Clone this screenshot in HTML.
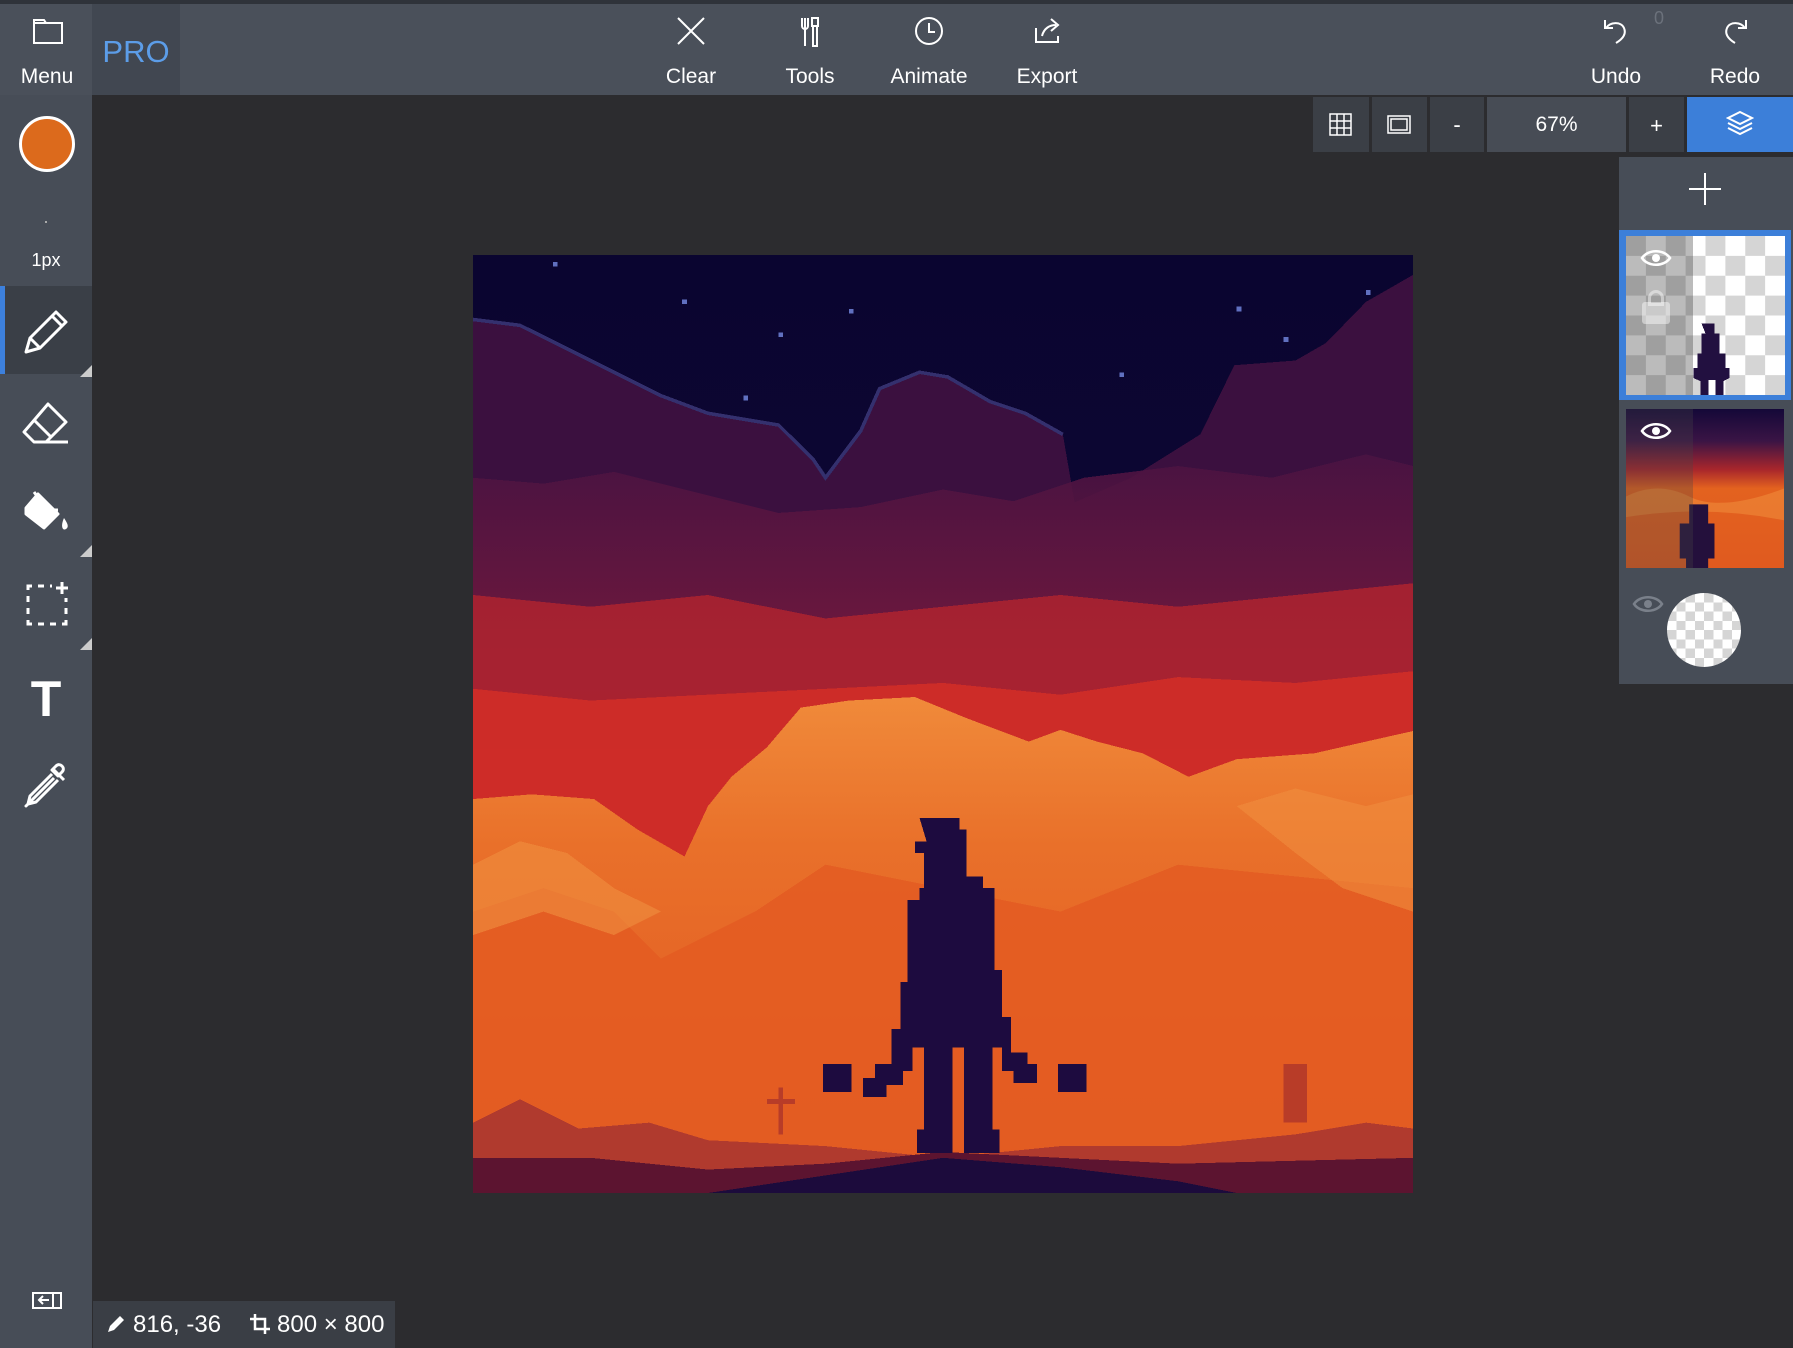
<!DOCTYPE html>
<html><head><meta charset="utf-8"><style>
*{margin:0;padding:0;box-sizing:border-box}
body{width:1793px;height:1348px;background:#2c2c2f;font-family:"Liberation Sans",sans-serif;color:#fff;position:relative;overflow:hidden}
.abs{position:absolute}
.top{left:0;top:0;width:1793px;height:95px;background:#4a505a;border-top:4px solid #2f333a}
.btn{position:absolute;top:4px;width:110px;height:91px;text-align:center}
.btn svg{position:absolute;left:40px;top:12px}
.btn span{position:absolute;left:0;right:0;top:61px;font-size:21px}
.side{left:0;top:95px;width:92px;height:1253px;background:#474d57}
.tool{position:absolute;left:0;width:92px;height:88px}
.tb{position:absolute;top:97px;height:55px;background:#3b3f46}
.tb svg{position:absolute}
</style></head><body>
<div class="abs top"></div>
<div class="abs" style="left:92px;top:4px;width:88px;height:91px;background:#414751"></div>
<div class="abs" style="left:92px;top:4px;width:88px;height:91px;text-align:center;line-height:95px;font-size:31px;color:#5c9de8">PRO</div>
<div class="btn" style="left:-8px"><svg width="32" height="30" viewBox="0 0 32 30"><path d="M2 4h10l2 3h16v20H2z M2 7h12" fill="none" stroke="#fff" stroke-width="2"/></svg><span>Menu</span></div>
<div class="btn" style="left:636px"><svg width="30" height="30" viewBox="0 0 30 30"><path d="M2 2L28 28M28 2L2 28" stroke="#fff" stroke-width="2"/></svg><span>Clear</span></div>
<div class="btn" style="left:755px"><svg width="30" height="32" viewBox="0 0 30 32"><path d="M10 2v28M7 2v8a3 3 0 006 0V2M18 10v20h4V10zM17 2h6v8h-6z" fill="none" stroke="#fff" stroke-width="2"/></svg><span>Tools</span></div>
<div class="btn" style="left:874px"><svg width="30" height="30" viewBox="0 0 30 30"><circle cx="15" cy="15" r="13" fill="none" stroke="#fff" stroke-width="2"/><path d="M15 7v9h6" fill="none" stroke="#fff" stroke-width="2"/></svg><span>Animate</span></div>
<div class="btn" style="left:992px"><svg width="32" height="30" viewBox="0 0 32 30"><path d="M4 12v14h22v-6M10 20c2-8 8-11 14-11M19 3l7 6-7 6" fill="none" stroke="#fff" stroke-width="2"/></svg><span>Export</span></div>
<div class="btn" style="left:1561px"><svg width="30" height="30" viewBox="0 0 30 30"><path d="M4 4v8h8M5 12C9 6 20 5 23 12s-3 12-8 15" fill="none" stroke="#fff" stroke-width="2"/></svg><span>Undo</span></div>
<div class="abs" style="left:1654px;top:8px;font-size:18px;color:#6b717b">0</div>
<div class="btn" style="left:1680px"><svg width="30" height="30" viewBox="0 0 30 30"><path d="M26 4v8h-8M25 12C21 6 10 5 7 12s3 12 8 15" fill="none" stroke="#fff" stroke-width="2"/></svg><span>Redo</span></div>

<div class="abs side"></div>
<div class="abs" style="left:19px;top:116px;width:56px;height:56px;border-radius:50%;background:#dc6a1c;border:3px solid #fff"></div>
<div class="abs" style="left:45px;top:221px;width:2px;height:2px;background:#aaa"></div>
<div class="abs" style="left:0;top:250px;width:92px;text-align:center;font-size:18px">1px</div>
<div class="tool" style="top:286px;background:#3a3f47;border-left:5px solid #3d80dc"></div>
<div class="abs" style="left:80px;top:365px;border-left:12px solid transparent;border-bottom:12px solid #ccc"></div>
<div class="abs" style="left:80px;top:545px;border-left:12px solid transparent;border-bottom:12px solid #ccc"></div>
<div class="abs" style="left:80px;top:638px;border-left:12px solid transparent;border-bottom:12px solid #ccc"></div>
<svg class="abs" style="left:20px;top:306px" width="52" height="52" viewBox="0 0 52 52"><path d="M6 46l4-14L36 6l10 10-26 26zM10 32l10 10M32 10l10 10" fill="none" stroke="#fff" stroke-width="3" stroke-linejoin="round"/></svg>
<svg class="abs" style="left:20px;top:400px" width="52" height="48" viewBox="0 0 52 48"><path d="M28 4l18 18-20 20H14L4 32zM14 20l18 18M14 42h34" fill="none" stroke="#fff" stroke-width="3" stroke-linejoin="round"/></svg>
<svg class="abs" style="left:22px;top:488px" width="50" height="50" viewBox="0 0 50 50"><path d="M16 6l20 20-14 14L4 26 4 20zM4 22h32" fill="#fff" stroke="#fff" stroke-width="3" stroke-linejoin="round"/><path d="M12 4l6 8" stroke="#fff" stroke-width="3"/><path d="M42 30c4 6 5 9 2 11s-6-2-2-11z" fill="#fff"/></svg>
<svg class="abs" style="left:24px;top:580px" width="48" height="48" viewBox="0 0 48 48"><path d="M4 10V6h4M14 6h6M26 6h2M4 16v6M4 28v6M4 40v4h4M14 44h6M26 44h6M38 44h4v-4M42 34v-6M42 22v-4" stroke="#fff" stroke-width="3" fill="none"/><path d="M38 2v12M32 8h12" stroke="#fff" stroke-width="3"/></svg>
<div class="abs" style="left:0;top:670px;width:92px;text-align:center;font-size:50px;font-weight:bold">T</div>
<svg class="abs" style="left:22px;top:760px" width="50" height="50" viewBox="0 0 50 50"><path d="M30 8l12 12M34 6c4-4 10 2 6 6l-4 4-6-6zM32 18L10 40l-6 6 6-6 0 0M30 14L8 36l-2 8 8-2 22-22" fill="none" stroke="#fff" stroke-width="3" stroke-linejoin="round"/></svg>
<svg class="abs" style="left:32px;top:1292px" width="30" height="18" viewBox="0 0 30 18"><rect x="1" y="1" width="28" height="15" fill="none" stroke="#fff" stroke-width="2"/><path d="M21 1v15M17 8H7M11 4L7 8l4 4" fill="none" stroke="#fff" stroke-width="2"/></svg>
<div class="abs" style="left:93px;top:1301px;width:302px;height:47px;background:#3a3e45;font-size:24px;line-height:47px">
<svg class="abs" style="left:14px;top:14px" width="18" height="18" viewBox="0 0 18 18"><path d="M1 17l2-6L13 1l4 4L7 15z" fill="#fff"/></svg>
<span class="abs" style="left:40px">816, -36</span>
<svg class="abs" style="left:157px;top:13px" width="20" height="20" viewBox="0 0 20 20"><path d="M5 0v15h15M0 5h15v15" fill="none" stroke="#fff" stroke-width="2.5"/></svg>
<span class="abs" style="left:184px">800 × 800</span></div>

<div class="tb" style="left:1313px;width:56px"><svg style="left:16px;top:16px" width="23" height="23" viewBox="0 0 23 23"><path d="M1 1h21v21H1zM8 1v21M15 1v21M1 8h21M1 15h21" fill="none" stroke="#fff" stroke-width="1.5"/></svg></div>
<div class="tb" style="left:1372px;width:55px"><svg style="left:15px;top:18px" width="24" height="19" viewBox="0 0 24 19"><rect x="1" y="1" width="22" height="17" fill="none" stroke="#fff" stroke-width="1.5"/><rect x="4" y="4" width="16" height="11" fill="none" stroke="#fff" stroke-width="1.5"/></svg></div>
<div class="tb" style="left:1430px;width:54px;text-align:center;line-height:55px;font-size:22px">-</div>
<div class="tb" style="left:1487px;width:139px;background:#474c55;text-align:center;line-height:55px;font-size:21px">67%</div>
<div class="tb" style="left:1629px;width:55px;text-align:center;line-height:58px;font-size:22px">+</div>
<div class="tb" style="left:1687px;width:106px;background:#3c7fd9"><svg style="left:39px;top:12px" width="28" height="28" viewBox="0 0 28 28"><path d="M14 3l12 6-12 6-12-6z" fill="none" stroke="#fff" stroke-width="2"/><path d="M2 14l12 6 12-6M2 19l12 6 12-6" fill="none" stroke="#fff" stroke-width="2"/></svg></div>

<div class="abs" style="left:1619px;top:157px;width:174px;height:527px;background:#474d57"></div>
<svg class="abs" style="left:1688px;top:172px" width="34" height="34" viewBox="0 0 34 34"><path d="M17 1v32M1 17h32" stroke="#fff" stroke-width="2"/></svg>
<div class="abs" style="left:1619px;top:230px;width:172px;height:170px;background:#3c7fd9"></div>
<svg class="abs" style="left:1626px;top:236px" width="159" height="159" viewBox="0 0 16 16" shape-rendering="crispEdges">
<defs><pattern id="ck" width="4" height="4" patternUnits="userSpaceOnUse"><rect width="4" height="4" fill="#fff"/><rect width="2" height="2" fill="#d5d5d5"/><rect x="2" y="2" width="2" height="2" fill="#d5d5d5"/></pattern></defs>
<rect width="16" height="16" fill="url(#ck)"/>
<path d="M7.6 8.8h1.3v1h.5v2h.6v1.5h.4v1l-.6.3v1.4H9v-1.5h-.7v1.5H7.5v-1.4l-.7-.3v-1h.4v-1.5h.4v-2h.4z" fill="#221040"/></svg>
<div class="abs" style="left:1626px;top:236px;width:67px;height:159px;background:rgba(60,60,60,.35)"></div>
<svg class="abs" style="left:1640px;top:247px" width="32" height="22" viewBox="0 0 32 22"><path d="M2 11C8 2 24 2 30 11 24 20 8 20 2 11z" fill="none" stroke="#fff" stroke-width="2.5"/><circle cx="16" cy="11" r="4" fill="#fff"/></svg>
<div class="abs" style="left:1642px;top:302px;width:28px;height:22px;background:rgba(255,255,255,.45);border-radius:3px"></div>
<div class="abs" style="left:1648px;top:290px;width:16px;height:16px;border:3px solid rgba(255,255,255,.45);border-radius:8px 8px 0 0"></div>
<svg class="abs" style="left:1626px;top:409px" width="158" height="159" viewBox="0 0 100 100" preserveAspectRatio="none"><defs><linearGradient id="lg2" x1="0" y1="0" x2="0" y2="1"><stop offset="0" stop-color="#140838"/><stop offset=".2" stop-color="#3a1445"/><stop offset=".38" stop-color="#a8262c"/><stop offset=".5" stop-color="#e3621f"/><stop offset="1" stop-color="#e05a1f"/></linearGradient></defs><rect width="100" height="100" fill="url(#lg2)"/><path d="M0 55Q20 45 40 55T100 50V70Q50 60 0 68z" fill="#f08a3a" opacity=".6"/><path d="M40 60h12v12h4v22h-4v6H38v-6h-4V72h6z" fill="#24103c"/></svg>
<div class="abs" style="left:1626px;top:409px;width:67px;height:159px;background:rgba(70,70,70,.3)"></div>
<svg class="abs" style="left:1640px;top:420px" width="32" height="22" viewBox="0 0 32 22"><path d="M2 11C8 2 24 2 30 11 24 20 8 20 2 11z" fill="none" stroke="#fff" stroke-width="2.5"/><circle cx="16" cy="11" r="4" fill="#fff"/></svg>
<svg class="abs" style="left:1632px;top:593px" width="32" height="22" viewBox="0 0 32 22"><path d="M2 11C8 2 24 2 30 11 24 20 8 20 2 11z" fill="none" stroke="#7a808a" stroke-width="2.5"/><circle cx="16" cy="11" r="4" fill="#7a808a"/></svg>
<svg class="abs" style="left:1667px;top:593px" width="74" height="74" viewBox="0 0 16 16" shape-rendering="crispEdges"><clipPath id="cc"><circle cx="8" cy="8" r="8"/></clipPath><g clip-path="url(#cc)"><rect width="16" height="16" fill="url(#ck)"/></g></svg>

<svg class="abs" style="left:473px;top:255px" width="940" height="938" viewBox="0 0 800 800" preserveAspectRatio="none" shape-rendering="crispEdges">
<defs>
<linearGradient id="sky" x1="0" y1="0" x2="0" y2="1"><stop offset="0" stop-color="#0a0530"/><stop offset="1" stop-color="#140838"/></linearGradient>
<linearGradient id="cl" x1="0" y1="0" x2="0" y2="1"><stop offset="0" stop-color="#4a1342"/><stop offset=".3" stop-color="#7a1a3c"/><stop offset=".6" stop-color="#a82232"/><stop offset="1" stop-color="#d8322a"/></linearGradient>
<linearGradient id="or" x1="0" y1="0" x2="0" y2="1"><stop offset="0" stop-color="#f08a3a"/><stop offset=".3" stop-color="#e9702a"/><stop offset="1" stop-color="#e05520"/></linearGradient>
</defs>
<rect width="800" height="800" fill="url(#sky)"/>
<g fill="#6070c0"><rect x="68" y="6" width="4" height="4"/><rect x="178" y="38" width="4" height="4"/><rect x="320" y="46" width="4" height="4"/><rect x="260" y="66" width="4" height="4"/><rect x="650" y="44" width="4" height="4"/><rect x="690" y="70" width="4" height="4"/><rect x="550" y="100" width="4" height="4"/><rect x="230" y="120" width="4" height="4"/><rect x="380" y="120" width="4" height="4"/><rect x="760" y="30" width="4" height="4"/></g>
<path d="M0 55L40 60 80 80 120 100 160 120 200 135 260 145 290 175 300 190 330 150 346 114 380 100 404 104 440 125 470 135 502 153 512 211 560 190 619 153 648 94 700 90 726 75 760 40 800 17V800H0z" fill="#3b103f"/>
<path d="M0 55L40 60 80 80 120 100 160 120 200 135 260 145 290 175 300 190 330 150 346 114 380 100 404 104 440 125 470 135 502 153" fill="none" stroke="#34306e" stroke-width="3"/>
<path d="M0 190L60 195 120 185 200 205 260 220 330 215 400 200 460 210 520 190 600 180 680 190 760 170 800 180V800H0z" fill="url(#cl)" opacity=".9"/>
<path d="M0 290L100 300 200 290 300 310 400 300 500 290 600 300 700 290 800 280V800H0z" fill="#b8262d" opacity=".75"/>
<path d="M0 370L100 380 200 375 300 370 400 365 500 375 600 360 700 365 800 355V800H0z" fill="#d42e27" opacity=".85"/>
<path d="M0 464L50 460 103 464 140 490 180 513 200 470 220 445 250 420 279 386 320 380 376 377 420 395 473 415 500 405 531 415 570 425 609 445 650 430 716 425 760 415 800 406V800H0z" fill="url(#or)"/>
<path d="M0 560L60 540 120 560 160 600 240 560 300 520 400 540 500 560 600 520 700 530 800 540V800H0z" fill="#e35c22" opacity=".9"/>
<path d="M0 520L40 500 80 510 120 540 160 560 120 580 60 560 0 580z" fill="#f09040" opacity=".6"/>
<path d="M650 470L700 455 760 470 800 460V560L740 540 700 510z" fill="#f09040" opacity=".55"/>
<path d="M0 740L40 720 90 745 150 740 200 755 300 760 400 770 500 760 600 760 700 750 760 740 800 745V800H0z" fill="#b03a2e"/>
<path d="M0 770L100 770 200 780 300 775 400 765 500 770 600 775 800 770V800H0z" fill="#5c1430"/>
<path d="M200 800L300 785 400 770 500 778 600 790 650 800z" fill="#1c0b3c"/>
<g fill="#1d0b3f">
<path d="M380 480h34v10h6v40h14v10h10v70h6v40h8v30h14v10h8v16h-20v-10h-10v-20h-8v70h6v20h-30v-90h-10v90h-30v-20h6v-70h-10v20h-8v12h-14v10h-20v-16h10v-12h14v-30h8v-40h6v-70h10v-10h4v-30h-8v-10h10z"/>
<rect x="298" y="690" width="24" height="24"/><rect x="498" y="690" width="24" height="24"/>
</g>
<g fill="#b83c28"><rect x="690" y="690" width="20" height="50"/><rect x="260" y="710" width="4" height="40"/><rect x="250" y="720" width="24" height="4"/></g>
</svg>
</body></html>
